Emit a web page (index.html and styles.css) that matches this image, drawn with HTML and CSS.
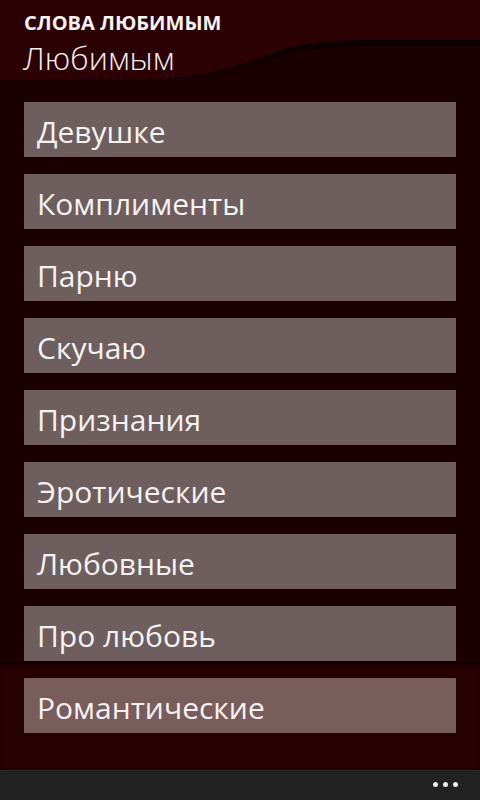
FILE: index.html
```html
<!DOCTYPE html>
<html lang="ru">
<head>
<meta charset="utf-8">
<link rel="stylesheet" href="styles.css">
</head>
<body>
<div class="page">
  <header class="header">
    <svg class="wave" viewBox="0 0 480 90" preserveAspectRatio="none" aria-hidden="true">
      <defs>
        <linearGradient id="sh" x1="0" y1="0" x2="0" y2="1">
          <stop offset="0" stop-color="#0a0001" stop-opacity="0.9"/>
          <stop offset="1" stop-color="#0a0001" stop-opacity="0"/>
        </linearGradient>
      </defs>
      <path d="M0 80 L160 79 C200 77 240 66 270 54 C295 44 320 41 360 40 L480 40 L480 46 L360 46 C320 47 300 50 272 60 C240 72 200 84 160 86 L0 86 Z" fill="url(#sh)"/>
      <path d="M0 0 L480 0 L480 40 L360 40 C320 41 295 44 270 54 C240 66 200 77 160 79 L0 80 Z" fill="#2b0104"/>
    </svg>
    <div class="app-title">СЛОВА ЛЮБИМЫМ</div>
    <div class="page-title">Любимым</div>
  </header>
  <main class="list">
    <div class="item">Девушке</div>
    <div class="item">Комплименты</div>
    <div class="item">Парню</div>
    <div class="item">Скучаю</div>
    <div class="item">Признания</div>
    <div class="item">Эротические</div>
    <div class="item">Любовные</div>
    <div class="item">Про любовь</div>
  </main>
  <section class="bottom">
    <div class="item item-hl">Романтические</div>
  </section>
  <footer class="appbar">
    <span class="dot"></span><span class="dot"></span><span class="dot"></span>
  </footer>
</div>
</body>
</html>
```
FILE: styles.css
```css
* { box-sizing: border-box; }
html, body { margin: 0; padding: 0; }
body {
  background: #1b0002;
  font-family: "Open Sans", "Noto Sans", "DejaVu Sans", sans-serif;
  color: #f6f2f2;
}
.page {
  width: 480px;
  height: 800px;
  display: flex;
  flex-direction: column;
  overflow: hidden;
}
.header {
  position: relative;
  height: 82px;
  padding: 9px 24px 0;
  flex: none;
}
.wave {
  position: absolute;
  left: 0;
  top: 0;
  width: 480px;
  height: 90px;
  z-index: 0;
}
.app-title, .page-title { position: relative; z-index: 1; }
.app-title {
  font-weight: 700;
  font-size: 20px;
  line-height: 27px;
}
.page-title {
  font-weight: 300;
  font-size: 32px;
  line-height: 40px;
  margin-top: 2px;
  margin-left: -1px;
}
.list {
  flex: none;
  padding: 20px 24px 2px;
  display: flex;
  flex-direction: column;
  gap: 17px;
}
.item {
  height: 55px;
  background: #6e5e5e;
  display: flex;
  align-items: center;
  padding: 3px 13px 0;
  font-size: 30px;
  white-space: nowrap;
}
.bottom {
  flex: none;
  height: 107px;
  background: #260103;
  padding: 15px 24px 0;
  box-shadow: inset 0 3px 3px -1px rgba(0,0,0,0.6);
}
.item-hl { background: #795c5c; }
.appbar {
  flex: 1;
  background: #212121;
  border-top: 1px solid #2c2c2c;
  display: flex;
  justify-content: flex-end;
  align-items: center;
  gap: 5px;
  padding: 0 22px 2px 0;
}
.dot {
  width: 5px;
  height: 5px;
  border-radius: 50%;
  background: #f0f0f0;
}
```
